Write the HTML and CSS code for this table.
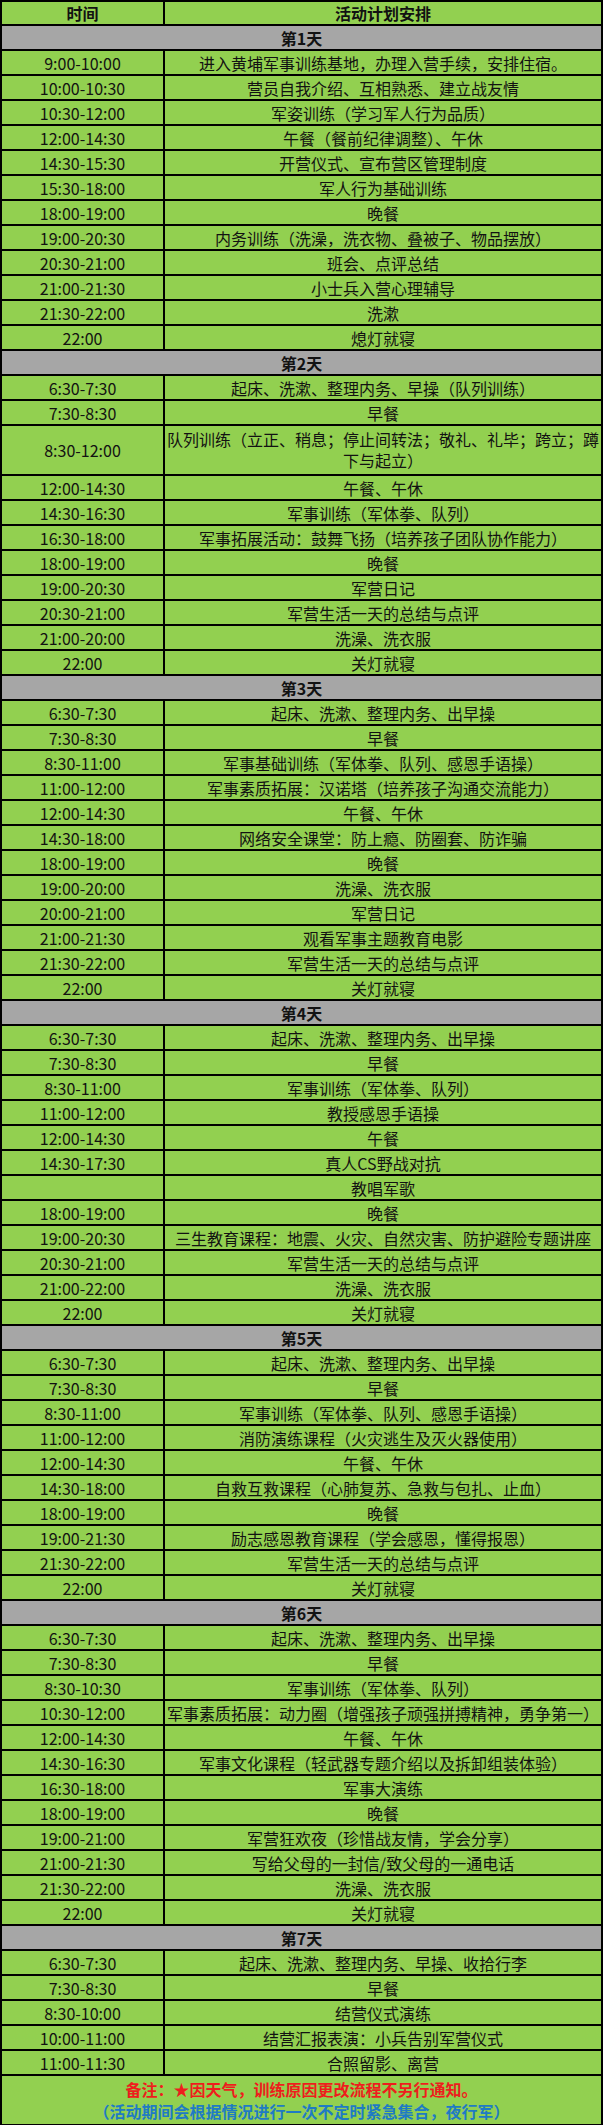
FILE: index.html
```html
<!DOCTYPE html>
<html lang="zh-CN">
<head>
<meta charset="utf-8">
<title>活动计划安排</title>
<link rel="stylesheet" href="styles.css">
</head>
<body>
<div class="sheet">
  <div class="cell head">时间</div><div class="cell head">活动计划安排</div>

  <div class="cell day">第1天</div>
  <div class="cell">9:00-10:00</div><div class="cell">进入黄埔军事训练基地，办理入营手续，安排住宿。</div>
  <div class="cell">10:00-10:30</div><div class="cell">营员自我介绍、互相熟悉、建立战友情</div>
  <div class="cell">10:30-12:00</div><div class="cell">军姿训练（学习军人行为品质）</div>
  <div class="cell">12:00-14:30</div><div class="cell">午餐（餐前纪律调整）、午休</div>
  <div class="cell">14:30-15:30</div><div class="cell">开营仪式、宣布营区管理制度</div>
  <div class="cell">15:30-18:00</div><div class="cell">军人行为基础训练</div>
  <div class="cell">18:00-19:00</div><div class="cell">晚餐</div>
  <div class="cell">19:00-20:30</div><div class="cell">内务训练（洗澡，洗衣物、叠被子、物品摆放）</div>
  <div class="cell">20:30-21:00</div><div class="cell">班会、点评总结</div>
  <div class="cell">21:00-21:30</div><div class="cell">小士兵入营心理辅导</div>
  <div class="cell">21:30-22:00</div><div class="cell">洗漱</div>
  <div class="cell">22:00</div><div class="cell">熄灯就寝</div>

  <div class="cell day">第2天</div>
  <div class="cell">6:30-7:30</div><div class="cell">起床、洗漱、整理内务、早操（队列训练）</div>
  <div class="cell">7:30-8:30</div><div class="cell">早餐</div>
  <div class="cell tall">8:30-12:00</div><div class="cell tall wrap">队列训练（立正、稍息；停止间转法；敬礼、礼毕；跨立；蹲下与起立）</div>
  <div class="cell">12:00-14:30</div><div class="cell">午餐、午休</div>
  <div class="cell">14:30-16:30</div><div class="cell">军事训练（军体拳、队列）</div>
  <div class="cell">16:30-18:00</div><div class="cell">军事拓展活动：鼓舞飞扬（培养孩子团队协作能力）</div>
  <div class="cell">18:00-19:00</div><div class="cell">晚餐</div>
  <div class="cell">19:00-20:30</div><div class="cell">军营日记</div>
  <div class="cell">20:30-21:00</div><div class="cell">军营生活一天的总结与点评</div>
  <div class="cell">21:00-20:00</div><div class="cell">洗澡、洗衣服</div>
  <div class="cell">22:00</div><div class="cell">关灯就寝</div>

  <div class="cell day">第3天</div>
  <div class="cell">6:30-7:30</div><div class="cell">起床、洗漱、整理内务、出早操</div>
  <div class="cell">7:30-8:30</div><div class="cell">早餐</div>
  <div class="cell">8:30-11:00</div><div class="cell">军事基础训练（军体拳、队列、感恩手语操）</div>
  <div class="cell">11:00-12:00</div><div class="cell">军事素质拓展：汉诺塔（培养孩子沟通交流能力）</div>
  <div class="cell">12:00-14:30</div><div class="cell">午餐、午休</div>
  <div class="cell">14:30-18:00</div><div class="cell">网络安全课堂：防上瘾、防圈套、防诈骗</div>
  <div class="cell">18:00-19:00</div><div class="cell">晚餐</div>
  <div class="cell">19:00-20:00</div><div class="cell">洗澡、洗衣服</div>
  <div class="cell">20:00-21:00</div><div class="cell">军营日记</div>
  <div class="cell">21:00-21:30</div><div class="cell">观看军事主题教育电影</div>
  <div class="cell">21:30-22:00</div><div class="cell">军营生活一天的总结与点评</div>
  <div class="cell">22:00</div><div class="cell">关灯就寝</div>

  <div class="cell day">第4天</div>
  <div class="cell">6:30-7:30</div><div class="cell">起床、洗漱、整理内务、出早操</div>
  <div class="cell">7:30-8:30</div><div class="cell">早餐</div>
  <div class="cell">8:30-11:00</div><div class="cell">军事训练（军体拳、队列）</div>
  <div class="cell">11:00-12:00</div><div class="cell">教授感恩手语操</div>
  <div class="cell">12:00-14:30</div><div class="cell">午餐</div>
  <div class="cell">14:30-17:30</div><div class="cell">真人CS野战对抗</div>
  <div class="cell"></div><div class="cell">教唱军歌</div>
  <div class="cell">18:00-19:00</div><div class="cell">晚餐</div>
  <div class="cell">19:00-20:30</div><div class="cell">三生教育课程：地震、火灾、自然灾害、防护避险专题讲座</div>
  <div class="cell">20:30-21:00</div><div class="cell">军营生活一天的总结与点评</div>
  <div class="cell">21:00-22:00</div><div class="cell">洗澡、洗衣服</div>
  <div class="cell">22:00</div><div class="cell">关灯就寝</div>

  <div class="cell day">第5天</div>
  <div class="cell">6:30-7:30</div><div class="cell">起床、洗漱、整理内务、出早操</div>
  <div class="cell">7:30-8:30</div><div class="cell">早餐</div>
  <div class="cell">8:30-11:00</div><div class="cell">军事训练（军体拳、队列、感恩手语操）</div>
  <div class="cell">11:00-12:00</div><div class="cell">消防演练课程（火灾逃生及灭火器使用）</div>
  <div class="cell">12:00-14:30</div><div class="cell">午餐、午休</div>
  <div class="cell">14:30-18:00</div><div class="cell">自救互救课程（心肺复苏、急救与包扎、止血）</div>
  <div class="cell">18:00-19:00</div><div class="cell">晚餐</div>
  <div class="cell">19:00-21:30</div><div class="cell">励志感恩教育课程（学会感恩，懂得报恩）</div>
  <div class="cell">21:30-22:00</div><div class="cell">军营生活一天的总结与点评</div>
  <div class="cell">22:00</div><div class="cell">关灯就寝</div>

  <div class="cell day">第6天</div>
  <div class="cell">6:30-7:30</div><div class="cell">起床、洗漱、整理内务、出早操</div>
  <div class="cell">7:30-8:30</div><div class="cell">早餐</div>
  <div class="cell">8:30-10:30</div><div class="cell">军事训练（军体拳、队列）</div>
  <div class="cell">10:30-12:00</div><div class="cell">军事素质拓展：动力圈（增强孩子顽强拼搏精神，勇争第一）</div>
  <div class="cell">12:00-14:30</div><div class="cell">午餐、午休</div>
  <div class="cell">14:30-16:30</div><div class="cell">军事文化课程（轻武器专题介绍以及拆卸组装体验）</div>
  <div class="cell">16:30-18:00</div><div class="cell">军事大演练</div>
  <div class="cell">18:00-19:00</div><div class="cell">晚餐</div>
  <div class="cell">19:00-21:00</div><div class="cell">军营狂欢夜（珍惜战友情，学会分享）</div>
  <div class="cell">21:00-21:30</div><div class="cell">写给父母的一封信/致父母的一通电话</div>
  <div class="cell">21:30-22:00</div><div class="cell">洗澡、洗衣服</div>
  <div class="cell">22:00</div><div class="cell">关灯就寝</div>

  <div class="cell day">第7天</div>
  <div class="cell">6:30-7:30</div><div class="cell">起床、洗漱、整理内务、早操、收拾行李</div>
  <div class="cell">7:30-8:30</div><div class="cell">早餐</div>
  <div class="cell">8:30-10:00</div><div class="cell">结营仪式演练</div>
  <div class="cell">10:00-11:00</div><div class="cell">结营汇报表演：小兵告别军营仪式</div>
  <div class="cell">11:00-11:30</div><div class="cell">合照留影、离营</div>

  <div class="cell note">
    <div class="red">备注：★因天气，训练原因更改流程不另行通知。</div>
    <div class="blue">（活动期间会根据情况进行一次不定时紧急集合，夜行军）</div>
  </div>
</div>
</body>
</html>
```

FILE: styles.css
```css
html, body {
  margin: 0;
  padding: 0;
  background: #ffffff;
}

.sheet {
  width: 603px;
  box-sizing: border-box;
  background: #000000;
  padding: 2px;
  display: grid;
  grid-template-columns: 161px 1fr;
  grid-template-rows: 22px;
  grid-auto-rows: 23px;
  gap: 2px;
  font-family: "Noto Sans CJK SC", "Microsoft YaHei", "DejaVu Sans", sans-serif;
  font-size: 16px;
  color: #121212;
}

.cell {
  background: #92d050;
  display: flex;
  align-items: center;
  justify-content: center;
  text-align: center;
  line-height: 20px;
  white-space: nowrap;
  overflow: hidden;
}

.head {
  font-weight: bold;
}

.day {
  grid-column: 1 / -1;
  background: #a6a6a6;
  font-weight: bold;
}

.tall {
  grid-row: span 2;
}

.wrap {
  white-space: normal;
  line-height: 21px;
  padding: 0 2px;
}

.note {
  grid-column: 1 / -1;
  grid-row: span 2;
  flex-direction: column;
  font-weight: bold;
  line-height: 22px;
  padding-bottom: 1px;
}

.red {
  color: #ee1d1d;
}

.blue {
  color: #1f7bc4;
}
```
